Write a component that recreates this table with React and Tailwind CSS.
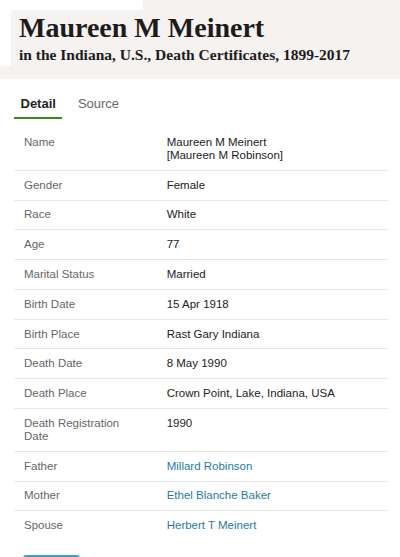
import React from 'react';

const rows = [
  { label: 'Name', value: ['Maureen M Meinert', '[Maureen M Robinson]'] },
  { label: 'Gender', value: 'Female' },
  { label: 'Race', value: 'White' },
  { label: 'Age', value: '77' },
  { label: 'Marital Status', value: 'Married' },
  { label: 'Birth Date', value: '15 Apr 1918' },
  { label: 'Birth Place', value: 'Rast Gary Indiana' },
  { label: 'Death Date', value: '8 May 1990' },
  { label: 'Death Place', value: 'Crown Point, Lake, Indiana, USA' },
  { label: 'Death Registration Date', value: '1990' },
  { label: 'Father', value: 'Millard Robinson', link: true },
  { label: 'Mother', value: 'Ethel Blanche Baker', link: true },
  { label: 'Spouse', value: 'Herbert T Meinert', link: true, last: true },
];

const sans = { fontFamily: '"Liberation Sans", Arial, sans-serif' };

export default function App() {
  return (
    <div className="w-[400px] h-[557px] overflow-hidden bg-white relative" style={sans}>
      {/* header */}
      <div className="bg-[#f5f2ef] pt-[12px] pb-[14px] pl-[19px]" style={{ fontFamily: '"Liberation Serif", "Times New Roman", serif' }}>
        <h1 className="text-[28px] leading-[32px] font-bold text-[#1c1c1c]">Maureen M Meinert</h1>
        <p className="mt-[1px] text-[15.5px] leading-[20px] font-bold text-[#1c1c1c]">
          in the Indiana, U.S., Death Certificates, 1899-2017
        </p>
      </div>
      <div className="absolute left-0 top-0 w-[143px] h-[10px] bg-white" />
      <div className="absolute left-0 top-[10px] w-[11px] h-[56px] bg-white" />

      {/* tabs */}
      <div className="flex gap-[9px] mt-[17px] ml-[14px]">
        <div className="px-[6.5px] pb-[5px] border-b-[2.5px] border-[#3b8a12] text-[13px] leading-[16px] font-bold text-[#222]">
          Detail
        </div>
        <div className="px-[6.5px] pb-[5px] text-[13px] leading-[16px] text-[#666]">Source</div>
      </div>

      {/* details */}
      <div className="mx-[14px] mt-[9px] w-[374px]">
        {rows.map((r) => (
          <div
            key={r.label}
            className={
              'flex py-[7.9px] text-[11.5px] leading-[13px] ' +
              (r.last ? '' : 'border-b border-[#e9e9e9]')
            }
          >
            <div className="w-[152.7px] shrink-0 pl-[10px] pr-[26px] text-[#666]">{r.label}</div>
            <div className={'flex-1 ' + (r.link ? 'text-[#1f7aa5]' : 'text-[#222]')}>
              {Array.isArray(r.value) ? r.value.map((v) => <div key={v}>{v}</div>) : r.value}
            </div>
          </div>
        ))}
      </div>

      <div className="ml-[23px] mt-[15px] w-[57px] h-[30px] rounded-t-[3px] border-t-2 border-[#3aa1cf]" />
    </div>
  );
}
